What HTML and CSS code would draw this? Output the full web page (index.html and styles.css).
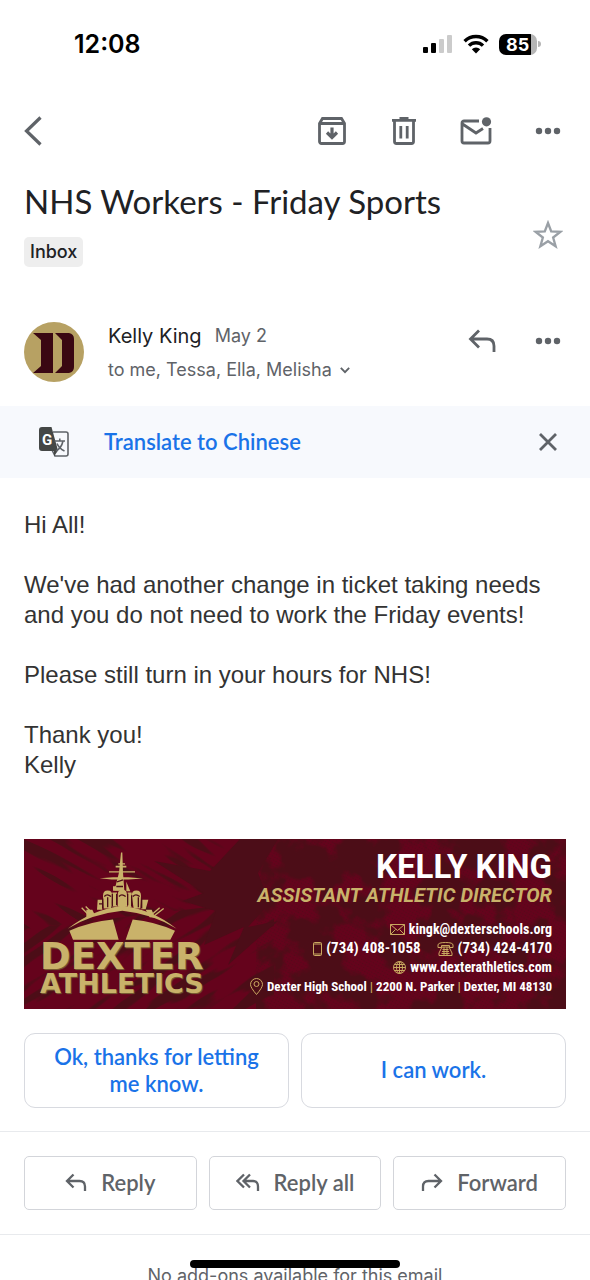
FILE: index.html
```
<!DOCTYPE html>
<html lang="en">
    <head>
        <meta charset="utf-8">
        <meta name="viewport" content="width=device-width, initial-scale=1">
        <title>NHS Workers - Friday Sports</title>
        <link rel="stylesheet" href="styles.css">
    </head>
    <body>
        <div class="status-bar">
            <span class="time">12:08</span>
            <div class="status-icons">
                <svg width="30" height="20" viewBox="0 0 30 20">
                    <rect x="0" y="13" width="5" height="6" rx="1" />
                    <rect x="8" y="9" width="5" height="10" rx="1" />
                    <rect x="16" y="5" width="5" height="14" rx="1" fill="#cbcbcb" />
                    <rect x="24" y="1" width="5" height="18" rx="1" fill="#cbcbcb" />
                </svg>
                <svg width="26" height="20" viewBox="0 0 26 20">
                    <g fill="none" stroke="#000" stroke-width="3.4">
                        <path d="M1.6 7.2a16.2 16.2 0 0 1 22.8 0" />
                        <path d="M6 11.6a10 10 0 0 1 14 0" />
                    </g>
                    <path d="M13 19.4l-4.2-4.2a6 6 0 0 1 8.4 0z" />
                </svg>
                <div class="battery">
                    <span class="battery-level">85</span>
                    <svg width="3" height="6" viewBox="0 0 3 6"><path d="M0 0a3 3 0 0 1 0 6z" fill="#b5b5b5" /></svg>
                </div>
            </div>
        </div>

        <header class="toolbar">
            <button class="icon-btn back" aria-label="Back">
                <svg width="20" height="30" viewBox="0 0 20 30"><path d="M16.500 1.500L2.500 15l14 13.500" class="line" /></svg>
            </button>
            <button class="icon-btn" aria-label="Archive">
                <svg width="28" height="28" viewBox="0 0 28 28">
                    <path d="M1.500 6.500L4.500 1.500h19l3 5v18a2 2 0 0 1-2 2h-21a2 2 0 0 1-2-2zM2 6.500h24" class="line medium" />
                    <path d="M14 10.500v9M9 15.500l5 5 5-5" class="line" />
                </svg>
            </button>
            <button class="icon-btn" aria-label="Delete">
                <svg width="28" height="28" viewBox="0 0 28 28">
                    <path d="M2 3.300h24M9.500 1.500h9M4.500 4v20.500a2 2 0 0 0 2 2h15a2 2 0 0 0 2-2V4M10.800 9v12.500M17.200 9v12.500" class="line medium" />
                </svg>
            </button>
            <button class="icon-btn" aria-label="Mark unread">
                <svg width="32" height="28" viewBox="0 0 32 28">
                    <path d="M19 4H4a2 2 0 0 0-2 2v18a2 2 0 0 0 2 2h24a2 2 0 0 0 2-2V11M2.500 7L16 16l7-4.500" class="line medium" />
                    <circle cx="26.500" cy="4.800" r="4.600" />
                </svg>
            </button>
            <button class="icon-btn" aria-label="More options">
                <svg width="26" height="8" viewBox="0 0 26 8">
                    <circle cx="4" cy="4" r="3.200" /><circle cx="13" cy="4" r="3.200" /><circle cx="22" cy="4" r="3.200" />
                </svg>
            </button>
        </header>

        <main>
            <section class="subject">
                <div>
                    <h1>NHS Workers - Friday Sports</h1>
                    <span class="label">Inbox</span>
                </div>
                <button class="icon-btn star" aria-label="Star">
                    <svg width="30" height="30" viewBox="0 0 28 28">
                        <path d="M14 2.800l3 7.900 8.400.4-6.600 5.200 2.300 8.200-7.100-4.700-7.100 4.700 2.300-8.200-6.600-5.200 8.400-.4z" fill="none" stroke="#9aa0a6" stroke-width="2.200" />
                    </svg>
                </button>
            </section>

            <section class="sender">
                <svg class="avatar" viewBox="0 0 60 60" role="img" aria-label="Kelly King">
                    <circle cx="30" cy="30" r="30" fill="#b7a163" />
                    <g fill="#3a0712">
                        <path d="M9 11h20v40H9l8-7V18z" />
                        <path d="M31 11h14q5 1 5 6v28q0 5-5 6H31l7-7V18z" />
                    </g>
                </svg>
                <div class="sender-info">
                    <div class="sender-line">
                        <span class="name">Kelly King</span>
                        <span class="date">May 2</span>
                    </div>
                    <button class="recipients">
                        to me, Tessa, Ella, Melisha
                        <svg width="10" height="8" viewBox="0 0 12 8"><path d="M1 1.500l5 5 5-5" class="line thin" /></svg>
                    </button>
                </div>
                <button class="icon-btn" aria-label="Reply">
                    <svg width="28" height="24" viewBox="0 0 28 24"><path d="M11 1.500L2.500 10l8.500 8.500M3 10h16q7 0 7 7v6" class="line medium" /></svg>
                </button>
                <button class="icon-btn" aria-label="More options">
                    <svg width="26" height="8" viewBox="0 0 26 8">
                        <circle cx="4" cy="4" r="3.200" /><circle cx="13" cy="4" r="3.200" /><circle cx="22" cy="4" r="3.200" />
                    </svg>
                </button>
            </section>

            <section class="translate">
                <svg width="30" height="30" viewBox="0 0 30 30">
                    <path d="M14 5h13q2 0 2 2v20q0 2-2 2H16l-3-6" fill="none" stroke="#5f6368" stroke-width="1.600" />
                    <path d="M3 0h9.500l6.500 23.500-4 6V24H3q-3 0-3-3V3q0-3 3-3z" fill="#444746" />
                    <text x="8" y="18" class="g-letter">G</text>
                    <path d="M15.500 14H26M20.800 11.500V14M24 14q-1.500 7-7 10M18 16.500q2 5 7.500 7.500" fill="none" stroke="#5f6368" stroke-width="1.600" />
                </svg>
                <a href="#translate">Translate to Chinese</a>
                <button class="icon-btn" aria-label="Dismiss">
                    <svg width="20" height="20" viewBox="0 0 20 20"><path d="M2 2l16 16M18 2L2 18" class="line medium" /></svg>
                </button>
            </section>

            <article class="message">
                <p>Hi All!</p>
                <p>We've had another change in ticket taking needs and you do not need to work the Friday events!</p>
                <p>Please still turn in your hours for NHS!</p>
                <p>Thank you!<br>Kelly</p>
            </article>

            <div class="signature">
                <svg class="texture" viewBox="0 0 542 170" preserveAspectRatio="none" aria-hidden="true">
                    <defs>
                        <pattern id="dots" width="3" height="3" patternUnits="userSpaceOnUse" patternTransform="rotate(30)">
                            <circle cx="1.500" cy="1.500" r=".8" fill="#4c0d18" />
                        </pattern>
                        <filter id="streaks" x="0" y="0" width="1" height="1" color-interpolation-filters="sRGB">
                            <feTurbulence type="fractalNoise" baseFrequency=".012 .09" numOctaves="2" seed="4" />
                            <feColorMatrix values="0 0 0 0 .3  0 0 0 0 .05  0 0 0 0 .09  14 0 0 0 -7.400" />
                        </filter>
                        <filter id="mottle" x="0" y="0" width="1" height="1" color-interpolation-filters="sRGB">
                            <feTurbulence type="fractalNoise" baseFrequency=".025" numOctaves="4" seed="7" />
                            <feColorMatrix values="0 0 0 0 .3  0 0 0 0 .05  0 0 0 0 .09  9 0 0 0 -4" />
                        </filter>
                        <clipPath id="upper"><path d="M0 0h250v60L0 90z" /></clipPath>
                        <clipPath id="lower"><path d="M0 90l250-30v110H0z" /></clipPath>
                    </defs>
                    <rect width="542" height="170" fill="#65031c" />
                    <g clip-path="url(#upper)"><rect x="-60" y="-200" width="400" height="400" transform="rotate(30)" filter="url(#streaks)" /></g>
                    <g clip-path="url(#lower)"><rect x="-160" y="-20" width="400" height="400" transform="rotate(-33)" filter="url(#streaks)" /></g>
                    <path d="M130 22l56 10 30-32h38l-20 34 12 30-22 24 30-6-50 44 16-38-40 18 12-34-34-10 22-8z" fill="#4c0d18" />
                    <rect x="232" width="310" height="170" filter="url(#mottle)" />
                    <rect x="232" width="310" height="170" fill="url(#dots)" opacity=".6" />
                </svg>
                <div class="team">
                    <svg class="ship" viewBox="150 45 330 275" role="img" aria-label="Battleship">
                        <g fill="#c9b26a">
                            <path d="M152 281q70-56 164-70 94 14 163 70-70-44-163-54-94 10-164 54z" />
                            <path d="M157 287q62-28 131-34l17 61H168zM347 253q66 6 127 34l-14 27H326z" />
                            <path d="M312 52h4l2 60 4 54h-30l8-30 6-24z" />
                            <path d="M304 84h20v4h-20zM276 108h78v4h-78zM248 129l40-3h46l44 4-44 3h-50zM296 92h32v5h-32z" />
                            <path d="M258 182q0-16 14-16t14 16l-4 38h-22zM302 180q0-16 14-16t14 16v34h-28zM344 182q0-16 14-16t14 16l-2 38h-20z" />
                            <path d="M242 194h14v30h-16zM286 172h14v42h-18zM332 172h12v44h-12zM374 194h20l-8 28h-14zM328 140l12 28h-12zM288 153h20v14h-20z" />
                            <path d="M208 224h18l8 16-26 8zM404 224h-18l12 22 16 2z" />
                        </g>
                        <g stroke="#c9b26a" stroke-width="4">
                            <path d="M194 218l22 22M206 214l22 22M428 218l-26 22M440 220l-28 22" />
                        </g>
                        <g fill="none" stroke="#4c0c18" stroke-width="4">
                            <path d="M262 184q8-10 20 0M306 184q8-10 20 0M348 184q8-10 20 0M272 186v30M286 176v38M299 176v34M332 176v34M344 180v34M364 186v30M257 190v30M374 190v30M246 206h10M300 140l18-6M298 154h20" />
                        </g>
                    </svg>
                    <div class="team-name">DEXTER</div>
                    <div class="team-sub">ATHLETICS</div>
                </div>
                <div class="contact">
                    <div class="contact-name">KELLY KING</div>
                    <div class="contact-role">ASSISTANT ATHLETIC DIRECTOR</div>
                    <div class="contact-line">
                        <svg width="15" height="11" viewBox="0 0 15 11"><path d="M.5.5h14v10H.5zl7 6 7-6M.5 10.500l5-5M14.500 10.500l-5-5" /></svg>
                        <span>kingk@dexterschools.org</span>
                    </div>
                    <div class="contact-line phones">
                        <svg width="9" height="14" viewBox="0 0 9 14"><rect x=".5" y=".5" width="8" height="13" rx="1" /><path d="M.5 2h8M.5 12h8" /></svg>
                        <span class="mobile">(734) 408-1058</span>
                        <svg width="17" height="14" viewBox="0 0 17 14"><path d="M1 5.500V3q0-2.500 7.500-2.500T16 3v2.500h-3.500V3.500h-8v2zM5 5h7l3 6v2.500H2V11zM5.500 7.500h6M5 9.500h7M4.500 11.500h8M7 5v8M10 5v8" /></svg>
                        <span>(734) 424-4170</span>
                    </div>
                    <div class="contact-line">
                        <svg width="13" height="13" viewBox="0 0 13 13"><circle cx="6.500" cy="6.500" r="6" /><ellipse cx="6.500" cy="6.500" rx="3" ry="6" /><path d="M.5 6.500h12M6.500.5v12M1.500 3.500h10M1.500 9.500h10" /></svg>
                        <span>www.dexterathletics.com</span>
                    </div>
                    <div class="contact-line address">
                        <svg width="13" height="17" viewBox="0 0 13 17"><path d="M6.500 16.500Q.5 9.500.5 6.500a6 6 0 0 1 12 0q0 3-6 10z" /><circle cx="6.500" cy="6" r="2.500" /></svg>
                        <span>Dexter High School <i>|</i> 2200 N. Parker <i>|</i> Dexter, MI 48130</span>
                    </div>
                </div>
            </div>

            <div class="smart-replies">
                <button>Ok, thanks for letting me know.</button>
                <button>I can work.</button>
            </div>

            <div class="actions">
                <button>
                    <svg width="22" height="18" viewBox="0 0 22 18"><path d="M8.500 1.500L2 8l6.500 6.500M2 8h12.500q5.500 0 5.500 5.500V18" class="line thin" /></svg>
                    Reply
                </button>
                <button>
                    <svg width="24" height="18" viewBox="0 0 24 18"><path d="M8 1.500L1.500 8 8 14.500M14 1.500L7.500 8l6.500 6.500M8 8h9q5 0 5 5.500V18" class="line thin" /></svg>
                    Reply all
                </button>
                <button>
                    <svg width="22" height="18" viewBox="0 0 22 18"><path d="M13.500 1.500L20 8l-6.500 6.500M20 8H7.500Q2 8 2 13.500V18" class="line thin" /></svg>
                    Forward
                </button>
            </div>
        </main>

        <footer class="addons">No add-ons available for this email</footer>
        <div class="home-indicator"></div>
    </body>
</html>
```
FILE: styles.css
```
* { box-sizing: border-box; }
body { margin: 0; height: 100vh; overflow: hidden; background: #fff; color: #202124; font-family: Lato, "Open Sans", sans-serif; }
button { font: inherit; color: inherit; background: none; border: none; padding: 0; cursor: pointer; }
a { color: #1a73e8; text-decoration: none; }
svg { display: block; flex: none; }
p, h1 { margin: 0; }
.line { fill: none; stroke: #5f6368; stroke-width: 3.2; }
.medium { stroke-width: 2.8; }
.thin { stroke-width: 2.3; }

.status-bar { display: flex; justify-content: space-between; align-items: center; height: 88px; padding: 0 49px 0 74px; }
.time { font: 600 25px/30px Inter, sans-serif; color: #000; }
.status-icons { display: flex; align-items: center; gap: 10px; }
.battery { display: flex; align-items: center; gap: 1px; }
.battery-level { width: 38px; border-radius: 7px; background: linear-gradient(90deg, #000 85%, #b5b5b5 85%); color: #fff; font: 700 18px/21px Inter, sans-serif; padding-left: 7px; }

.toolbar { display: flex; align-items: center; height: 86px; padding: 0 22px 0 24px; }
.icon-btn { display: flex; align-items: center; justify-content: center; width: 72px; height: 40px; fill: #5f6368; }
.icon-btn:last-child { width: 52px; margin-left: 10px; margin-right: -6px; }
.back { justify-content: flex-start; margin-right: auto; }

.subject { display: flex; justify-content: space-between; align-items: flex-end; padding: 7px 24px 0; }
h1 { font-size: 33px; line-height: 40px; font-weight: 400; }
.label { display: inline-block; margin-top: 16px; padding: 0 6px; border-radius: 5px; background: #eee; font: 500 18px/30px Inter, sans-serif; }
.subject .icon-btn { width: 28px; margin: 0 4px 12px 0; }

.sender { display: flex; align-items: flex-start; padding: 55px 22px 24px 24px; }
.sender .icon-btn { width: 60px; height: 38px; }
.sender .icon-btn:last-child { width: 52px; }
.avatar { width: 60px; height: 60px; margin-right: 24px; }
.sender-info { flex: 1; height: 60px; font: 20px/28px Inter, sans-serif; }
.sender-line { display: flex; gap: 13px; }
.date { font-size: 18px; color: #5f6368; }
.recipients { display: flex; align-items: center; gap: 8px; margin-top: 6px; font-size: 18px; color: #5f6368; }

.translate { display: flex; align-items: center; height: 72px; padding: 0 22px 0 39px; background: #f7f9fd; font-size: 22px; line-height: 26px; font-weight: 600; }
.translate a { flex: 1; margin-left: 35px; }
.g-letter { font: 700 15px Roboto, sans-serif; fill: #fff; text-anchor: middle; }

.message { padding: 32px 24px 0; font: 24px/30px "Liberation Sans", Arial, sans-serif; color: #333; }
.message p + p { margin-top: 30px; }

.signature { position: relative; display: flex; justify-content: space-between; height: 170px; margin: 59px 24px 0; padding: 11px 14px 0 16px; overflow: hidden; color: #fff; }
.texture { position: absolute; left: 0; top: 0; width: 100%; height: 100%; }
.team, .contact { position: relative; }
.team { display: flex; flex-direction: column; align-items: center; color: #c9b26a; font-family: "DejaVu Sans", sans-serif; font-weight: 700; text-shadow: 1px 1px 1px #7a6535; }
.ship { width: 110px; height: 92px; }
.team-name { font-size: 37px; line-height: 30px; }
.team-sub { font-size: 27px; line-height: 24px; }
.contact { display: flex; flex-direction: column; align-items: flex-end; font-family: "Roboto Condensed", Roboto, sans-serif; font-weight: 700; }
.contact-name { font: 700 33px/34px Roboto, sans-serif; }
.contact-role { margin-bottom: 14px; font: italic 700 20px/22px Roboto, sans-serif; color: #c9b26a; }
.contact-line { display: flex; align-items: center; gap: 4px; font-size: 14px; line-height: 19px; white-space: nowrap; }
.contact-line svg { fill: none; stroke: #c9a860; stroke-width: 1; }
.contact-line i { font-style: normal; color: #c9a860; }
.phones { font-size: 15px; }
.mobile { margin-right: 12px; }
.address { font-size: 13px; }

.smart-replies { display: grid; grid-template-columns: 1fr 1fr; gap: 12px; padding: 24px 24px 23px; }
.smart-replies button { min-height: 75px; padding: 0 24px 2px; border: 1px solid #d8dae0; border-radius: 11px; color: #1a73e8; font-size: 22px; line-height: 27px; font-weight: 600; }

.actions { display: grid; grid-template-columns: repeat(3, 1fr); gap: 12px; padding: 24px; border-top: 1px solid #e8eaed; border-bottom: 1px solid #e8eaed; }
.actions button { display: flex; align-items: center; justify-content: center; gap: 14px; height: 54px; padding-bottom: 2px; border: 1px solid #d3d5da; border-radius: 5px; color: #5f6368; font-size: 22px; font-weight: 600; }

.addons { margin-top: 28px; text-align: center; font: 18px/26px Inter, sans-serif; color: #5f6368; }
.home-indicator { position: fixed; left: 50%; bottom: 12px; width: 210px; height: 8px; margin-left: -105px; border-radius: 4px; background: #000; }
```
